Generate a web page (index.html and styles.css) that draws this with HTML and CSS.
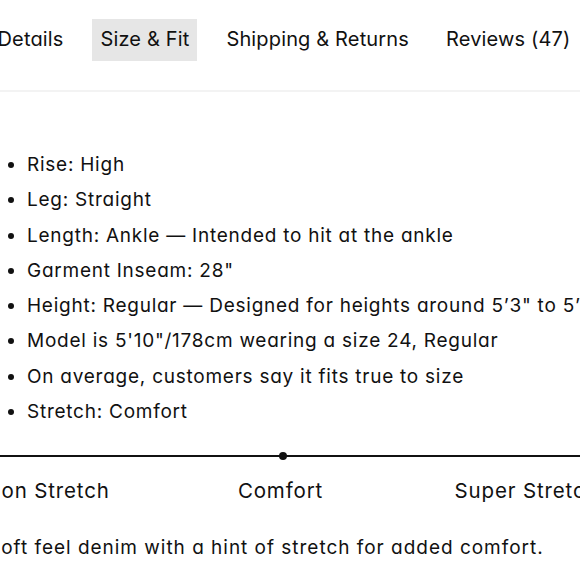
FILE: index.html
```html
<!DOCTYPE html>
<html lang="en">
<head>
<meta charset="utf-8">
<link rel="stylesheet" href="styles.css">
</head>
<body>
<div class="page">
  <nav class="tabs">
    <div class="tab">Details</div>
    <div class="tab active">Size &amp; Fit</div>
    <div class="tab">Shipping &amp; Returns</div>
    <div class="tab">Reviews (47)</div>
  </nav>
  <ul class="specs">
    <li>Rise: High</li>
    <li>Leg: Straight</li>
    <li>Length: Ankle — Intended to hit at the ankle</li>
    <li>Garment Inseam: 28"</li>
    <li>Height: Regular — Designed for heights around 5’3" to 5’7"</li>
    <li>Model is 5'10"/178cm wearing a size 24, Regular</li>
    <li>On average, customers say it fits true to size</li>
    <li>Stretch: Comfort</li>
  </ul>
  <div class="stretch">
    <div class="track"><span class="dot"></span></div>
    <div class="labels">
      <span class="lbl">Non Stretch</span>
      <span class="lbl">Comfort</span>
      <span class="lbl">Super Stretch</span>
    </div>
  </div>
  <p class="desc">Soft feel denim with a hint of stretch for added comfort.</p>
</div>
</body>
</html>
```
FILE: styles.css
```css
html, body {
  margin: 0;
  padding: 0;
  background: #ffffff;
  overflow: hidden;
}
body {
  font-family: Inter, "Liberation Sans", sans-serif;
  font-feature-settings: "cv11" 1;
  color: #111111;
  width: 580px;
  height: 580px;
}
.page {
  margin-left: -12px;
  width: 606px;
}
.tabs {
  display: flex;
  gap: 21px;
  padding-top: 19px;
  padding-bottom: 29px;
  border-bottom: 2px solid #f3f3f3;
  margin-left: 1.5px;
}
.tab {
  font-size: 20px;
  height: 42px;
  line-height: 41px;
  padding: 0 8px;
  white-space: nowrap;
  letter-spacing: 0.15px;
}
.tab.active {
  background: #e6e6e6;
}
.specs {
  margin: 55px 0 0 0;
  padding-left: 39px;
  font-size: 19px;
  line-height: 35.3px;
  letter-spacing: 0.75px;
  white-space: nowrap;
}
.stretch {
  margin-top: 26px;
}
.track {
  position: relative;
  height: 2px;
  background: #111111;
}
.dot {
  position: absolute;
  left: 291px;
  top: -3px;
  width: 8px;
  height: 8px;
  border-radius: 50%;
  background: #111111;
}
.labels {
  display: grid;
  grid-template-columns: 231px 235px 257px;
  margin-left: -56px;
  font-size: 20.5px;
  line-height: 26px;
  letter-spacing: 0.85px;
  margin-top: 21px;
  white-space: nowrap;
}
.lbl {
  text-align: center;
}
.desc {
  margin: 31px 0 0 0;
  font-size: 19px;
  line-height: 26px;
  letter-spacing: 0.98px;
  white-space: nowrap;
}
```
